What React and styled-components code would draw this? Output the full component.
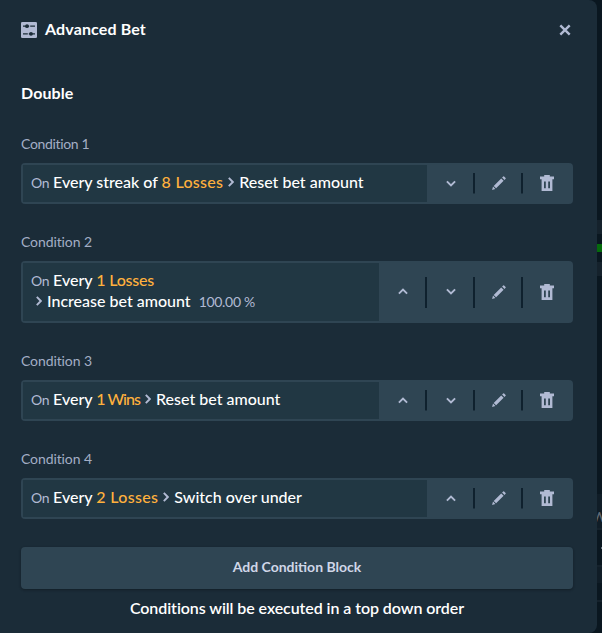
import React from 'react'
import styled, { createGlobalStyle } from 'styled-components'

const GlobalStyle = createGlobalStyle`
  * {
    box-sizing: border-box;
  }
  body {
    margin: 0;
    background: #0a1720;
    font-family: Lato, "Liberation Sans", sans-serif;
    font-variant-ligatures: none;
    color: #fff;
  }
`

const Page = styled.div`
  display: flex;
  height: 633px;
  overflow: hidden;
`

const Modal = styled.section`
  flex: 0 0 597px;
  padding: 20px 24px 0 21px;
  background: #1b2c38;
  border-radius: 0 8px 8px 0;
`

const Header = styled.header`
  display: flex;
  align-items: center;
  height: 20px;
`

const Title = styled.h1`
  flex: 1;
  margin: 0 0 0 8px;
  padding-bottom: 2px;
  font-size: 16px;
  font-weight: 700;
  line-height: 20px;
  letter-spacing: 0.13px;
`

const IconButton = styled.button`
  display: flex;
  align-items: center;
  justify-content: center;
  width: 16px;
  height: 20px;
  padding: 0;
  border: 0;
  background: none;
  color: #b1bad3;
  cursor: pointer;
`

const StrategyName = styled.h2`
  margin: 42px 0 0;
  font-size: 16px;
  font-weight: 700;
  line-height: 22px;
  letter-spacing: 0.1px;
`

const Conditions = styled.div`
  display: flex;
  flex-direction: column;
  gap: 28px;
  margin-top: 30px;
`

const Label = styled.div`
  height: 29px;
  font-size: 14px;
  line-height: 20px;
  letter-spacing: ${(p) => p.$spacing}px;
  color: #a3aec5;
`

const Block = styled.div`
  display: flex;
  padding-left: 2px;
  padding-right: 2px;
  border-radius: 4px;
  background: #2f4553;
`

const Rule = styled.div`
  flex: 1;
  margin: 2px 0;
  padding: 6px 8px 10px;
  background: #213743;
  font-size: 16px;
  font-weight: 500;
  line-height: 21px;
`

const RuleLine = styled.div`
  display: flex;
  align-items: center;
  height: 21px;
  padding-left: ${(p) => (p.$indent ? 5 : 0)}px;
  white-space: pre;
`

const On = styled.span`
  width: 22px;
  padding-top: 1px;
  font-size: 14px;
  font-weight: 400;
  letter-spacing: -0.3px;
  color: #b1bad3;
`

const Amount = styled.span`
  color: #ffb13d;
  letter-spacing: ${(p) => p.$spacing || 0}px;
`

const Arrow = styled.svg`
  flex: none;
  width: 6px;
  height: 10px;
  margin: 1px 5px 0 ${(p) => (p.$first ? 0 : 5)}px;
  color: #b1bad3;
`

const Percent = styled.span`
  margin-left: 8px;
  padding-top: 1px;
  font-size: 14px;
  font-weight: 400;
  letter-spacing: -0.3px;
  color: #b1bad3;
`

const Actions = styled.div`
  display: flex;
`

const Action = styled.button`
  display: flex;
  align-items: center;
  justify-content: center;
  width: 48px;
  padding: 0 0 1px;
  border: 0;
  color: #b1bad3;
  cursor: pointer;
  background: linear-gradient(#0f212e, #0f212e) right center / 2px 50% no-repeat;

  &:last-child {
    background: none;
  }
`

const AddButton = styled.button`
  display: block;
  width: 100%;
  height: 42px;
  margin-top: 28px;
  padding: 0 0 3px;
  border: 0;
  border-radius: 4px;
  background: #2f4553;
  box-shadow: 0 1px 3px rgba(0, 0, 0, 0.2), 0 1px 2px rgba(0, 0, 0, 0.12);
  font-family: inherit;
  font-size: 14px;
  font-weight: 700;
  color: #d0d7e8;
  cursor: pointer;
`

const Note = styled.p`
  margin: 8px 0 0;
  font-size: 16px;
  font-weight: 600;
  line-height: 21px;
  letter-spacing: -0.07px;
  text-align: center;
`

// sliver of the dimmed page next to the dialog
const Backdrop = styled.aside`
  flex: 1;
  overflow: hidden;
`

const Strip = styled.div`
  height: ${(p) => p.$h}px;
  background: ${(p) => p.$color || 'transparent'};
  color: #626a73;
  font-size: 14px;
  font-weight: 600;
  line-height: ${(p) => p.$h + 11}px;
  text-indent: -5px;
`

const Tick = styled.div`
  width: 1px;
  height: 2px;
  margin-left: auto;
  background: #66727c;
`

const SlidersIcon = () => (
  <svg width="16" height="16" viewBox="0 0 16 16">
    <rect width="16" height="16" rx="1.3" fill="#b1bad3" />
    <g stroke="#1b2c38" strokeWidth="1.2">
      <path d="M2 4.2h6.2M9.2 4.2h4.8M2 11.8h4.8M7.8 11.8h6.2" />
    </g>
    <circle cx="6" cy="4.2" r="1.9" fill="#1b2c38" />
    <circle cx="10" cy="11.8" r="1.9" fill="#1b2c38" />
  </svg>
)

const CloseIcon = () => (
  <svg width="12" height="12" viewBox="0 0 12 12" fill="none" stroke="currentColor" strokeWidth="2.4">
    <path d="M1.3 1.3l9.4 9.4M10.7 1.3l-9.4 9.4" />
  </svg>
)

const ChevronIcon = ({ up }) => (
  <svg width="10" height="7" viewBox="0 0 10 7" fill="none" stroke="currentColor" strokeWidth="1.9">
    <path d={up ? 'M.9 5.7L5 1.6l4.1 4.1' : 'M.9 1.3L5 5.4l4.1-4.1'} />
  </svg>
)

const PencilIcon = () => (
  <svg width="14" height="14" viewBox="0 0 14 14" fill="currentColor">
    <path d="M.1 13.9l.9-3.3 2.4 2.4zM1.7 9.9l7.5-7.5 2.4 2.4-7.5 7.5zM10.1 1.5L11.2.4q.4-.4.9 0l1.5 1.5q.4.5 0 .9l-1.1 1.1z" />
  </svg>
)

const TrashIcon = () => (
  <svg width="14" height="16" viewBox="0 0 14 16" fill="currentColor">
    <path fillRule="evenodd" d="M4.2 0h5.6v1.6H14v2.7H0V1.6h4.2zM1.6 4.3h10.8V16H1.6zM4 6.5v6.8h1.8V6.5zM8.2 6.5v6.8H10V6.5z" />
  </svg>
)

const RuleArrow = ({ first }) => (
  <Arrow $first={first} viewBox="0 0 6 10" fill="none" stroke="currentColor" strokeWidth="1.9">
    <path d="M.8.9L4.8 5l-4 4.1" />
  </Arrow>
)

const conditions = [
  { trigger: 'Every streak of ', amount: '8 Losses', spacing: 0.27, action: 'Reset bet amount' },
  { trigger: 'Every ', amount: '1 Losses', spacing: -0.2, action: 'Increase bet amount', percent: '100.00 %' },
  { trigger: 'Every ', amount: '1 Wins', spacing: -0.95, action: 'Reset bet amount' },
  { trigger: 'Every ', amount: '2 Losses', spacing: 0.33, action: 'Switch over under' },
]

const Condition = ({ index, trigger, amount, spacing, action, percent }) => (
  <div>
    <Label $spacing={index ? -0.1 : -0.33}>Condition {index + 1}</Label>
    <Block>
      <Rule>
        <RuleLine>
          <On>On</On>
          <span>{trigger}</span>
          <Amount $spacing={spacing}>{amount}</Amount>
          {!percent && <RuleArrow />}
          {!percent && <span>{action}</span>}
        </RuleLine>
        {percent && (
          <RuleLine $indent>
            <RuleArrow first />
            <span>{action}</span>
            <Percent>{percent}</Percent>
          </RuleLine>
        )}
      </Rule>
      <Actions>
        {index > 0 && <Action aria-label="Move up"><ChevronIcon up /></Action>}
        {index < conditions.length - 1 && <Action aria-label="Move down"><ChevronIcon /></Action>}
        <Action aria-label="Edit"><PencilIcon /></Action>
        <Action aria-label="Delete"><TrashIcon /></Action>
      </Actions>
    </Block>
  </div>
)

const App = () => (
  <Page>
    <GlobalStyle />
    <Modal>
      <Header>
        <SlidersIcon />
        <Title>Advanced Bet</Title>
        <IconButton aria-label="Close"><CloseIcon /></IconButton>
      </Header>
      <StrategyName>Double</StrategyName>
      <Conditions>
        {conditions.map((c, i) => (
          <Condition key={i} index={i} {...c} />
        ))}
      </Conditions>
      <AddButton>Add Condition Block</AddButton>
      <Note>Conditions will be executed in a top down order</Note>
    </Modal>
    <Backdrop>
      <Strip $h={220} />
      <Strip $h={14} $color="#15222c" />
      <Strip $h={10} />
      <Strip $h={8} $color="#056b0c" />
      <Strip $h={10} />
      <Strip $h={14} $color="#15222c" />
      <Strip $h={218} />
      <Strip $h={34} $color="#101d27">W</Strip>
      <Strip $h={2} $color="#15222c" />
      <Strip $h={17} />
      <Tick />
      <Strip $h={16} />
      <Strip $h={2} $color="#15222c" />
      <Strip $h={16} $color="#101d27" />
      <Strip $h={17} />
      <Strip $h={2} $color="#15222c" />
    </Backdrop>
  </Page>
)

export default App
